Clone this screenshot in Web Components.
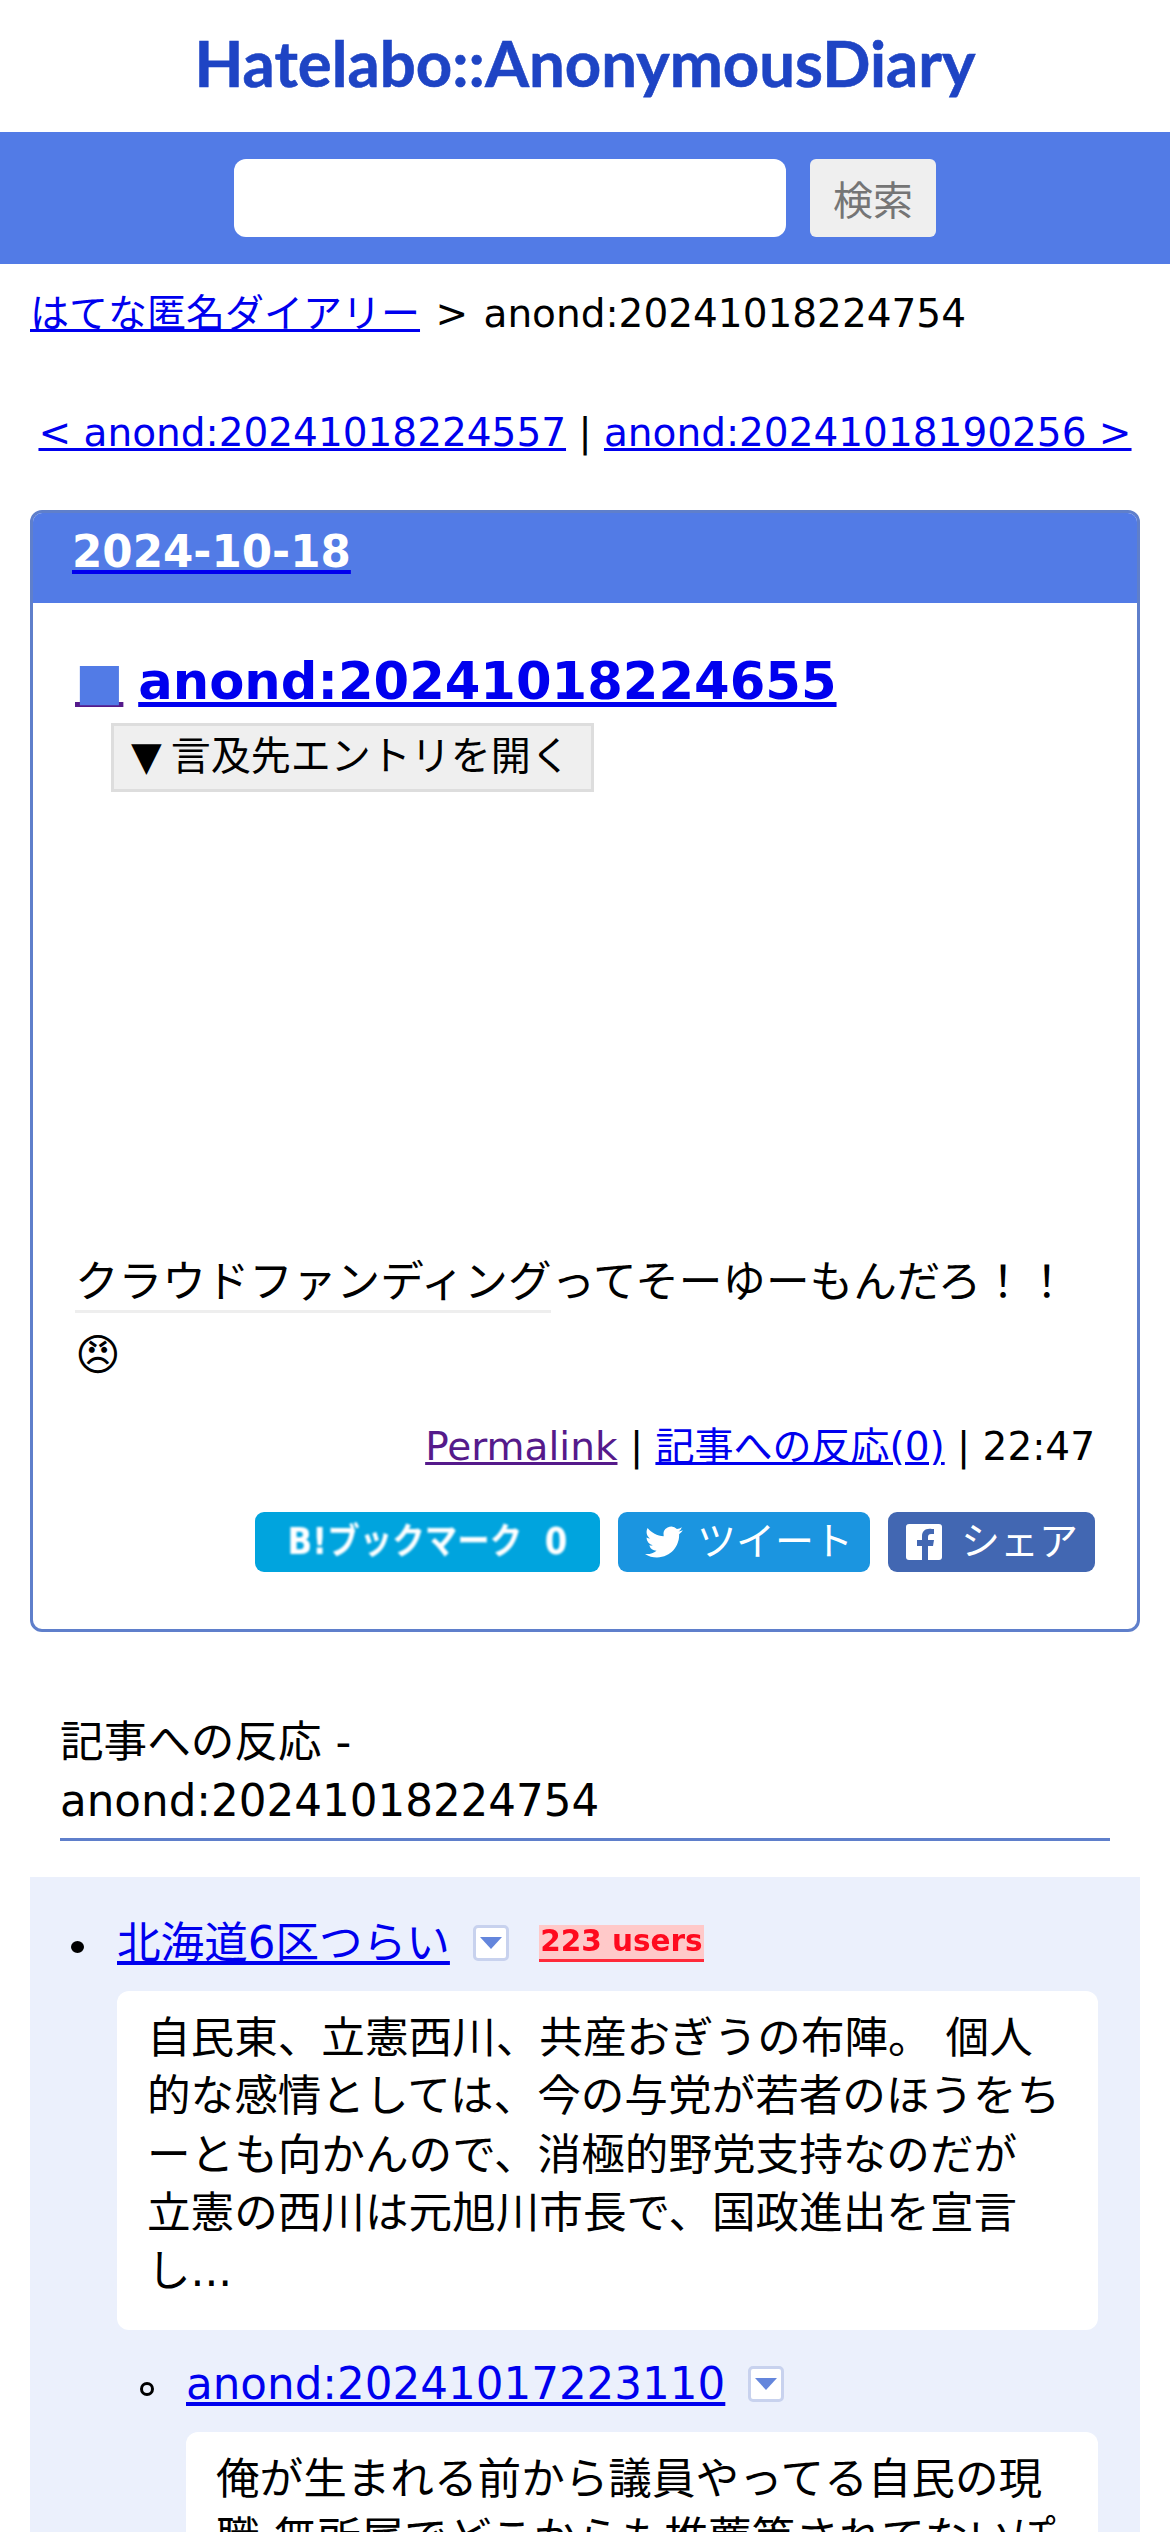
<!DOCTYPE html>
<html lang="ja">
<head>
<meta charset="utf-8">
<title>はてな匿名ダイアリー</title>
<style>
  html, body { margin: 0; height: 2532px; overflow: hidden; background: #fff; }
  body { font: 43.6px/58px "DejaVu Sans", "Noto Sans CJK JP", sans-serif; color: #000; }
</style>
</head>
<body>
<anon-header></anon-header>
<anon-crumbs current="anond:20241018224754"></anon-crumbs>
<anon-pager prev="anond:20241018224557" next="anond:20241018190256"></anon-pager>
<anon-day date="2024-10-18">
  <anon-entry title="anond:20241018224655" time="22:47">
    <span style="border-bottom:3px solid #eee;padding-bottom:3px">クラウドファンディング</span>ってそーゆーもんだろ！！<br><span>&#x1F620;</span>
  </anon-entry>
</anon-day>
<anon-refs title="記事への反応 - anond:20241018224754">
  <anon-ref name="北海道6区つらい" users="223 users" text="自民東、立憲西川、共産おぎうの布陣。 個人<br>的な感情としては、今の与党が若者のほうをち<br>ーとも向かんので、消極的野党支持なのだが<br>立憲の西川は元旭川市長で、国政進出を宣言<br>し...">
    <anon-ref nested name="anond:20241017223110" text="俺が生まれる前から議員やってる自民の現<br>職,無所属でどこからも推薦等されてないぽ"></anon-ref>
  </anon-ref>
</anon-refs>

<script>
// リンク色は元ページのまま(ブラウザ既定色)
const linkCss = `a { color: #0000ee; } a.visited { color: #551a8b; }`;

class AnonHeader extends HTMLElement {
  constructor() {
    super();
    this.attachShadow({ mode: 'open' });
  }
  connectedCallback() {
    this.shadowRoot.innerHTML = `
      <style>
        :host { display: block; }
        .logo { height: 132px; padding-bottom: 6px; box-sizing: border-box; display: flex; align-items: center; justify-content: center;
          font: 700 63.5px/1 Lato, sans-serif; color: #1e44c4; -webkit-text-stroke: .6px #1e44c4; }
        form { height: 132px; background: #527be6; display: flex; justify-content: center;
          align-items: center; gap: 24px; margin: 0; }
        .box { width: 552px; height: 78px; background: #fff; border-radius: 12px; }
        .btn { width: 126px; height: 78px; background: #efefef; border-radius: 6px; color: #757575;
          font-size: 40px; padding-top: 5px; box-sizing: border-box; display: flex; align-items: center; justify-content: center; }
      </style>
      <div class="logo">Hatelabo::AnonymousDiary</div>
      <form><div class="box"></div><div class="btn">検索</div></form>
    `;
  }
}
customElements.define('anon-header', AnonHeader);

class AnonCrumbs extends HTMLElement {
  constructor() {
    super();
    this.attachShadow({ mode: 'open' });
  }
  connectedCallback() {
    this.shadowRoot.innerHTML = `
      <style>
        ${linkCss}
        :host { display: block; padding: 21px 30px 0; font-size: 39px; line-height: 58px; word-spacing: 3px; }
        a { word-spacing: 0; }
      </style>
      <a href="#">はてな匿名ダイアリー</a> &gt; ${this.getAttribute('current')}
    `;
  }
}
customElements.define('anon-crumbs', AnonCrumbs);

class AnonPager extends HTMLElement {
  constructor() {
    super();
    this.attachShadow({ mode: 'open' });
  }
  connectedCallback() {
    this.shadowRoot.innerHTML = `
      <style>
        ${linkCss}
        :host { display: block; margin-top: 61px; text-align: center; font-size: 39px; line-height: 58px; white-space: nowrap; }
      </style>
      <a href="#">&lt; ${this.getAttribute('prev')}</a> | <a href="#">${this.getAttribute('next')} &gt;</a>
    `;
  }
}
customElements.define('anon-pager', AnonPager);

class AnonDay extends HTMLElement {
  constructor() {
    super();
    this.attachShadow({ mode: 'open' });
  }
  connectedCallback() {
    this.shadowRoot.innerHTML = `
      <style>
        ${linkCss}
        :host { display: block; margin: 48px 30px 0; border: 3px solid #5f7fcb; border-radius: 12px; overflow: hidden; }
        h2 { margin: -3px 0 0; height: 93px; background: #527be6; padding: 3px 0 0 39px; box-sizing: border-box; font-size: 43.6px; line-height: 78px; font-weight: 700; }
        h2 a { color: #fff; text-decoration-color: #0000ee; }
      </style>
      <h2><a href="#">${this.getAttribute('date')}</a></h2>
      <slot></slot>
    `;
  }
}
customElements.define('anon-day', AnonDay);

class AnonEntry extends HTMLElement {
  constructor() {
    super();
    this.attachShadow({ mode: 'open' });
  }
  connectedCallback() {
    this.shadowRoot.innerHTML = `
      <style>
        ${linkCss}
        :host { display: block; padding: 42px 42px 57px; }
        h3 { margin: 0; font-size: 51.2px; line-height: 72px; font-weight: 700; white-space: nowrap; word-spacing: -3px; }
        a.mark { color: #527be6; text-decoration-color: #551a8b; }
        .toggle { margin: 6px 0 0 36px; box-sizing: border-box; height: 69px; width: 483px;
          border: 3px solid #ddd; background: #efefef; padding-left: 17px; font-size: 40px; line-height: 60px; white-space: nowrap; }
        .toggle span { margin-right: 9px; }
        .body { margin-top: 454px; line-height: 73px; }
        .foot { margin-top: 26px; text-align: right; font-size: 39px; line-height: 58px; }
      </style>
      <h3><a class="mark" href="#">■</a> <a href="#">${this.getAttribute('title')}</a></h3>
      <div class="toggle"><span>▼</span>言及先エントリを開く</div>
      <div class="body"><slot></slot></div>
      <div class="foot"><a class="visited" href="#">Permalink</a> | <a href="#">記事への反応(0)</a> | ${this.getAttribute('time')}</div>
      <share-bar></share-bar>
    `;
  }
}
customElements.define('anon-entry', AnonEntry);

class ShareBar extends HTMLElement {
  constructor() {
    super();
    this.attachShadow({ mode: 'open' });
  }
  connectedCallback() {
    this.shadowRoot.innerHTML = `
      <style>
        :host { display: flex; justify-content: flex-end; gap: 18px; margin-top: 36px; }
        .b { height: 60px; border-radius: 9px; color: #fff; display: flex; align-items: center; box-sizing: border-box; font-size: 39px; white-space: nowrap; }
        .hb { width: 345px; background: #00a4de; font-weight: 700; font-size: 32.500px; justify-content: center; }
        .hb span { display: inline-block; filter: blur(.8px); transform: scaleY(1.12); }
        .tw { width: 252px; background: #1b95e0; gap: 14px; padding-left: 27px; }
        .fb { width: 207px; background: #4267b2; gap: 19px; padding-left: 18px; }
        svg { display: block; flex: none; }
      </style>
      <div class="b hb"><span>B!ブックマーク&nbsp; 0</span></div>
      <div class="b tw">
        <svg width="38" height="38" viewBox="0 0 24 24" fill="#fff"><path d="M23.95 4.57a10 10 0 0 1-2.82.77 4.96 4.96 0 0 0 2.16-2.72c-.95.55-2 .96-3.12 1.19a4.92 4.92 0 0 0-8.38 4.48C7.69 8.1 4.07 6.13 1.64 3.16a4.82 4.82 0 0 0-.66 2.47c0 1.71.87 3.21 2.19 4.1a4.9 4.9 0 0 1-2.23-.61v.06a4.92 4.92 0 0 0 3.95 4.83 5 5 0 0 1-2.21.08 4.94 4.94 0 0 0 4.6 3.42A9.87 9.87 0 0 1 0 19.54a14 14 0 0 0 7.56 2.21c9.05 0 14-7.5 14-13.98 0-.21 0-.42-.02-.63a9.94 9.94 0 0 0 2.41-2.57z"/></svg>
        <span>ツイート</span>
      </div>
      <div class="b fb">
        <svg width="36" height="36" viewBox="0 0 36 36"><rect width="36" height="36" rx="3" fill="#fff"/><path fill="#4267b2" d="M22 36V22h5l1-6h-6v-3c0-2 1-3 3-3h3V5c-1 0-3-.3-4.500-.3C19 4.700 16 7.500 16 12v4h-5v6h5v14z"/></svg>
        <span>シェア</span>
      </div>
    `;
  }
}
customElements.define('share-bar', ShareBar);

class AnonRefs extends HTMLElement {
  constructor() {
    super();
    this.attachShadow({ mode: 'open' });
  }
  connectedCallback() {
    this.shadowRoot.innerHTML = `
      <style>
        :host { display: block; margin: 81px 30px 0; }
        h2 { margin: 0 30px; padding-bottom: 7px; border-bottom: 3px solid #5f7fcb; font-size: 43.6px; line-height: 59px; font-weight: 400; }
        .t { display: block; max-width: 640px; }
        .panel { margin-top: 36px; background: #ebf0fc; padding: 37px 42px 0 87px; }
      </style>
      <h2><span class="t">${this.getAttribute('title')}</span></h2>
      <div class="panel"><slot></slot></div>
    `;
  }
}
customElements.define('anon-refs', AnonRefs);

class AnonRef extends HTMLElement {
  constructor() {
    super();
    this.attachShadow({ mode: 'open' });
  }
  connectedCallback() {
    const users = this.getAttribute('users');
    this.shadowRoot.innerHTML = `
      <style>
        ${linkCss}
        :host { display: block; position: relative; }
        :host([nested]) { margin: 25px 0 0 69px; }
        .row { display: flex; align-items: center; height: 58px; white-space: nowrap; }
        .bullet { position: absolute; left: -46px; top: 27px; width: 13px; height: 12px; border-radius: 50%; background: #000; }
        :host([nested]) .bullet { box-sizing: border-box; width: 14px; height: 14px; background: none; border: 3.5px solid #000; }
        .drop { width: 36px; height: 36px; box-sizing: border-box; margin-left: 23px; background: #fff; border: 3px solid #c8d2ee; border-radius: 5px;
          display: flex; align-items: center; justify-content: center; }
        .drop::after { content: ""; border: 11px solid transparent; border-top: 12px solid #6486dc; border-bottom: 0; }
        .users { margin-left: 30px; width: 165px; box-sizing: border-box; height: 37px; background: #ffc9c9; border-bottom: 3px solid #ff2a3a; text-align: center;
          font: 700 29.5px/33px "DejaVu Sans", sans-serif; color: #ff0a1e; }
        .users span { display: inline-block; filter: blur(.4px); }
        .text { margin-top: 19px; background: #fff; border-radius: 12px; padding: 18px 30px 30px; line-height: 58.25px; }
      </style>
      <span class="bullet"></span>
      <div class="row"><a href="#">${this.getAttribute('name')}</a><span class="drop"></span>${users ? `<span class="users"><span>${users}</span></span>` : ''}</div>
      <div class="text">${this.getAttribute('text')}</div>
      <slot></slot>
    `;
  }
}
customElements.define('anon-ref', AnonRef);
</script>
</body>
</html>
